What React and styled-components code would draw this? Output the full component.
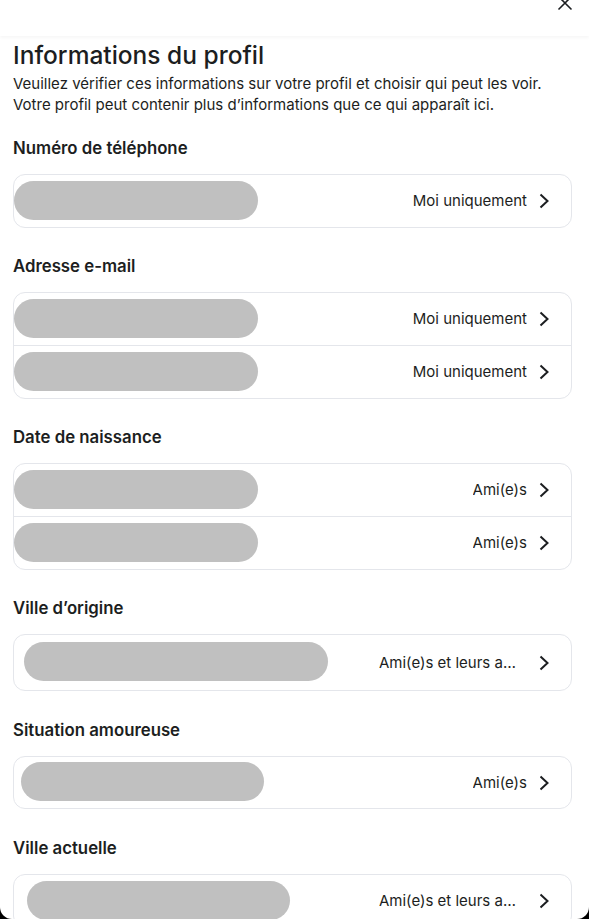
import styled, { createGlobalStyle } from 'styled-components'

const Global = createGlobalStyle`
  html, body {
    margin: 0;
    background: #000;
    overflow: hidden;
  }
  body {
    font-family: Inter, "Noto Sans", sans-serif;
    color: #1c1e21;
  }
`

const Modal = styled.div`
  width: 589px;
  height: 919px;
  background: #fff;
  border-radius: 0 0 12px 12px;
  overflow: hidden;
  display: flex;
  flex-direction: column;
`

const Header = styled.header`
  height: 36px;
  flex-shrink: 0;
  display: flex;
  justify-content: flex-end;
  align-items: flex-start;
  padding-right: 16px;
  box-shadow: 0 2px 3px rgba(0, 0, 0, 0.035);
  position: relative;
  z-index: 1;
`

const CloseButton = styled.button`
  border: none;
  background: none;
  padding: 0;
  margin-top: -5px;
  width: 16px;
  height: 16px;
  display: flex;
  cursor: pointer;
  color: #1c1e21;
`

const Body = styled.div`
  flex: 1;
  padding: 4px 17px 0 13px;
`

const Title = styled.h1`
  margin: 0;
  font-size: 24.5px;
  line-height: 31px;
  font-weight: 500;
`

const Intro = styled.p`
  margin: 2px 0 0;
  font-size: 15px;
  line-height: 21px;
  font-weight: 400;
`

const Section = styled.section`
  margin-top: ${(p) => p.$gap}px;
`

const Label = styled.h2`
  margin: 0 0 15px;
  font-size: 16.8px;
  line-height: 22px;
  font-weight: 600;
`

const Card = styled.div`
  border: 1px solid #e4e6eb;
  border-radius: 12px;
  display: flex;
  flex-direction: column;
`

const Row = styled.div`
  height: ${(p) => p.$height || 52}px;
  display: flex;
  align-items: center;
  padding-right: 21px;
  & + & {
    border-top: 1px solid #e4e6eb;
  }
`

const Redacted = styled.div`
  height: 39px;
  width: ${(p) => p.$width}px;
  margin-left: ${(p) => p.$offset}px;
  margin-bottom: 2px;
  border-radius: 20px;
  background: #c0c0c0;
  flex-shrink: 0;
`

const Audience = styled.span`
  margin-left: auto;
  font-size: 15px;
  line-height: 20px;
  white-space: nowrap;
  overflow: hidden;
  text-overflow: ellipsis;
  max-width: ${(p) => p.$max || 300}px;
`

const Chevron = styled.svg`
  width: 12px;
  height: 16px;
  margin-left: 11px;
  flex-shrink: 0;
`

function ChevronIcon() {
  return (
    <Chevron viewBox="0 0 12 16" fill="none">
      <path d="M2.5 1.5 L9.5 8 L2.5 14.5" stroke="#1c1e21" strokeWidth="2" />
    </Chevron>
  )
}

const sections = [
  {
    label: 'Numéro de téléphone',
    gap: 22,
    rows: [{ width: 244, offset: 0, audience: 'Moi uniquement' }],
  },
  {
    label: 'Adresse e-mail',
    gap: 27,
    rows: [
      { width: 244, offset: 0, audience: 'Moi uniquement' },
      { width: 244, offset: 0, audience: 'Moi uniquement' },
    ],
  },
  {
    label: 'Date de naissance',
    gap: 27,
    rows: [
      { width: 244, offset: 0, audience: 'Ami(e)s' },
      { width: 244, offset: 0, audience: 'Ami(e)s' },
    ],
  },
  {
    label: 'Ville d’origine',
    gap: 27,
    rows: [{ width: 304, offset: 10, audience: 'Ami(e)s et leurs ami(e)s', max: 148, height: 55 }],
  },
  {
    label: 'Situation amoureuse',
    gap: 28,
    rows: [{ width: 243, offset: 7, audience: 'Ami(e)s', height: 51 }],
  },
  {
    label: 'Ville actuelle',
    gap: 28,
    rows: [{ width: 263, offset: 13, audience: 'Ami(e)s et leurs ami(e)s', max: 148 }],
  },
]

export default function App() {
  return (
    <>
      <Global />
      <Modal>
        <Header>
          <CloseButton aria-label="Fermer">
            <svg width="16" height="16" viewBox="0 0 16 16" fill="none">
              <path d="M1.5 1.5 L14.5 14.5 M14.5 1.5 L1.5 14.5" stroke="currentColor" strokeWidth="1.6" />
            </svg>
          </CloseButton>
        </Header>
        <Body>
          <Title>Informations du profil</Title>
          <Intro>
            Veuillez vérifier ces informations sur votre profil et choisir qui peut les voir.
            <br />
            Votre profil peut contenir plus d’informations que ce qui apparaît ici.
          </Intro>
          {sections.map((s) => (
            <Section key={s.label} $gap={s.gap}>
              <Label>{s.label}</Label>
              <Card>
                {s.rows.map((r, i) => (
                  <Row key={i} $height={r.height}>
                    <Redacted $width={r.width} $offset={r.offset} />
                    <Audience $max={r.max}>{r.audience}</Audience>
                    <ChevronIcon />
                  </Row>
                ))}
              </Card>
            </Section>
          ))}
        </Body>
      </Modal>
    </>
  )
}
